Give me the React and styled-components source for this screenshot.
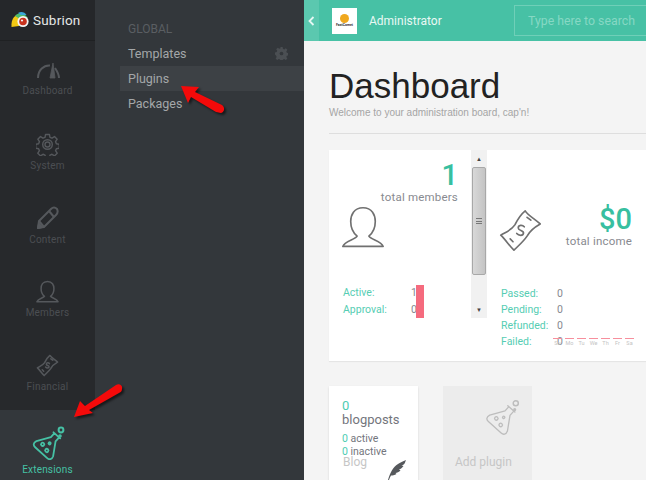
import React from 'react';
import styled, { createGlobalStyle } from 'styled-components';

const GlobalStyle = createGlobalStyle`
  html, body {
    margin: 0;
    padding: 0;
    background: #f4f4f4;
  }
  * {
    box-sizing: border-box;
  }
`;

const Page = styled.div`
  position: relative;
  display: flex;
  width: 646px;
  height: 480px;
  overflow: hidden;
  font-family: Roboto, "Liberation Sans", sans-serif;
`;

const Sidebar = styled.nav`
  width: 95px;
  flex: none;
  display: flex;
  flex-direction: column;
  background: #27292c;
`;

const Brand = styled.div`
  height: 41px;
  display: flex;
  align-items: center;
  gap: 4px;
  padding-left: 11px;
  background: #25272a;
  border-bottom: 1px solid #1f2123;
  color: #e6e7e8;
  font-size: 13.5px;
  letter-spacing: 0.2px;
`;

const NavItem = styled.div`
  height: ${(p) => p.$height || 74}px;
  display: flex;
  flex-direction: column;
  align-items: center;
  justify-content: center;
  gap: ${(p) => p.$gap || 4}px;
  padding-top: ${(p) => p.$pad || 0}px;
  background: ${(p) => (p.$active ? '#33373b' : 'transparent')};
  color: ${(p) => (p.$active ? '#46c1a5' : '#4b4e52')};
  font-size: 10px;
  letter-spacing: 0.2px;
`;

const SubMenu = styled.div`
  width: 209px;
  flex: none;
  display: flex;
  flex-direction: column;
  padding: 21px 0 0 25px;
  background: #33373b;
`;

const SubTitle = styled.div`
  height: 20px;
  padding-left: 8px;
  line-height: 16px;
  color: #5a5e62;
  font-size: 12px;
`;

const SubItem = styled.div`
  height: 25px;
  display: flex;
  align-items: center;
  justify-content: space-between;
  padding: 0 16px 0 8px;
  background: ${(p) => (p.$active ? '#3d4145' : 'transparent')};
  color: #a4a7a9;
  font-size: 12.5px;
`;

const Main = styled.main`
  flex: 1;
  min-width: 0;
  display: flex;
  flex-direction: column;
  background: #f4f4f4;
`;

const TopBar = styled.header`
  height: 41px;
  flex: none;
  display: flex;
  align-items: center;
  background: #47c1a5;
  color: #e9f8f4;
`;

const Toggle = styled.div`
  width: 15px;
  height: 100%;
  display: flex;
  align-items: center;
  justify-content: center;
  background: #5bc8af;
`;

const CompanyLogo = styled.div`
  width: 25px;
  height: 26px;
  margin-left: 13px;
  display: flex;
  flex-direction: column;
  align-items: center;
  padding-top: 6px;
  background: #fff;
  color: #333;
  font-size: 3.5px;
  font-weight: 700;
  line-height: 5px;
`;

const Coin = styled.span`
  width: 9px;
  height: 9px;
  border-radius: 50%;
  background: #f0a81e;
`;

const UserName = styled.div`
  margin-left: 12px;
  font-size: 12px;
`;

const Search = styled.div`
  width: 150px;
  height: 31px;
  margin-left: auto;
  margin-right: -18px;
  padding-left: 13px;
  line-height: 30px;
  border: 1px solid #6fcfb8;
  color: #86d8c4;
  font-size: 12.3px;
`;

const Content = styled.div`
  flex: 1;
  display: flex;
  flex-direction: column;
  padding: 25px 0 0 25px;
`;

const Heading = styled.h1`
  margin: 0;
  height: 40px;
  color: #222;
  font-family: "Liberation Sans", Arial, sans-serif;
  font-size: 35px;
  font-weight: 400;
  line-height: 40px;
`;

const Welcome = styled.div`
  height: 13px;
  color: #a5a5a5;
  font-family: "Liberation Sans", Arial, sans-serif;
  font-size: 10px;
  line-height: 13px;
`;

const Rule = styled.div`
  height: 1px;
  margin-top: 14px;
  background: #dedede;
`;

const StatsPanel = styled.section`
  height: 211px;
  flex: none;
  display: flex;
  margin-top: 16px;
  background: #fff;
  box-shadow: 0 1px 1px rgba(0, 0, 0, 0.06);
`;

const Stat = styled.div`
  position: relative;
  width: ${(p) => p.$width}px;
  display: flex;
  flex-direction: column;
  padding: ${(p) => p.$padding};
`;

const Scrollbar = styled.div`
  position: absolute;
  top: 0;
  right: 0;
  width: 16px;
  height: 168px;
  display: flex;
  flex-direction: column;
  align-items: center;
  background: #f1f1f1;
`;

const ScrollArrow = styled.span`
  height: 17px;
  flex: none;
  display: flex;
  align-items: center;
  margin-top: ${(p) => (p.$end ? 'auto' : '0')};
  color: #444;
  font-size: 6px;
`;

const ScrollThumb = styled.div`
  width: 14px;
  height: 108px;
  display: flex;
  align-items: center;
  justify-content: center;
  border: 1px solid #a8a8a8;
  border-radius: 2px;
  background: linear-gradient(to right, #d8d8d8, #c4c4c4);
`;

const Grip = styled.span`
  width: 6px;
  height: 6px;
  border-top: 1px solid #777;
  border-bottom: 1px solid #777;
  background: linear-gradient(#777, #777) center / 100% 1px no-repeat;
`;

const BigNumber = styled.div`
  color: #38bfa0;
  font-size: ${(p) => p.$size}px;
  font-weight: 500;
  line-height: 1;
  text-align: right;
`;

const BigLabel = styled.div`
  color: #888a90;
  font-size: 11.5px;
  letter-spacing: 0.2px;
  line-height: 15px;
  text-align: right;
`;

const MemberIcon = styled.div`
  height: 79px;
  display: flex;
  margin-left: -2px;
`;

const IncomeIcon = styled.div`
  position: absolute;
  left: 11px;
  top: 58px;
  display: flex;
`;

const Details = styled.div`
  display: flex;
  flex-direction: column;
  margin-top: ${(p) => p.$top || 0}px;
`;

const DetailRow = styled.div`
  height: ${(p) => p.$height}px;
  display: grid;
  grid-template-columns: ${(p) => p.$label}px auto;
  align-items: center;
  color: #868890;
  font-size: 10.5px;
`;

const DetailLabel = styled.span`
  color: #56cdb3;
`;

const PinkBar = styled.div`
  position: absolute;
  left: 87px;
  top: 135px;
  width: 8px;
  height: 33px;
  background: #f56b7e;
`;

const MiniChart = styled.div`
  position: absolute;
  left: 66px;
  top: 188px;
  display: flex;
  gap: 3px;
`;

const ChartDay = styled.span`
  width: 9px;
  border-top: 1px solid #f78f9d;
  color: #c4c4c4;
  font-size: 5.5px;
  line-height: 9px;
  text-align: center;
`;

const Tiles = styled.section`
  display: flex;
  gap: 25px;
  margin-top: 25px;
`;

const Tile = styled.div`
  position: relative;
  width: 89px;
  height: 100px;
  flex: none;
  padding: ${(p) => (p.$muted ? '0' : '13px 0 0 13px')};
  background: ${(p) => (p.$muted ? '#ececec' : '#fff')};
  box-shadow: ${(p) => (p.$muted ? 'none' : '0 1px 2px rgba(0, 0, 0, 0.12)')};
`;

const TileCount = styled.div`
  color: #4dccb2;
  font-size: 13px;
  line-height: 14px;
`;

const TileName = styled.div`
  color: #73757c;
  font-size: 13px;
  line-height: 14px;
  margin-bottom: 5px;
`;

const TileLine = styled.div`
  color: #73757c;
  font-size: 10.5px;
  line-height: 13px;

  b {
    color: #4dccb2;
    font-weight: 400;
  }
`;

const TileCaption = styled.div`
  position: absolute;
  left: ${(p) => p.$left}px;
  top: ${(p) => p.$top}px;
  color: #c6c6c6;
  font-size: 12px;
  white-space: nowrap;
`;

const TileIcon = styled.div`
  position: absolute;
  left: ${(p) => p.$left}px;
  top: ${(p) => p.$top}px;
  display: flex;
`;

const Arrow = styled.svg`
  position: absolute;
  left: ${(p) => p.$left}px;
  top: ${(p) => p.$top}px;
  filter: drop-shadow(2px 2px 1px rgba(0, 0, 0, 0.55));
`;

const SubrionLogo = () => (
  <svg width="18" height="17" viewBox="0 0 18 17">
    <path d="M0.5 16 C0 9 3 3.5 8 4 L8 15 Z" fill="#f2c813" />
    <path d="M4 5 C7 1 13 1 17 7 L9 8 Z" fill="#4dbb6e" />
    <path d="M7 2 C10 0 14 1 15.5 4 L10 4 Z" fill="#3aa7d8" />
    <circle cx="12" cy="10.5" r="5.6" fill="#f4f4f4" />
    <circle cx="12" cy="10.5" r="3.8" fill="#c8321e" />
    <circle cx="11" cy="9.5" r="1.1" fill="#f4f4f4" />
  </svg>
);

const Gauge = () => (
  <svg width="24" height="17" viewBox="0 0 24 17" fill="none" stroke="#55585c" strokeWidth="2">
    <path d="M2 16 C2 8 8 3 14 3.5" />
    <path d="M19 6 C21 9 23 12 23 16" />
    <path d="M14 16 L17 1 L19 16 Z" fill="#55585c" strokeWidth="0.8" />
  </svg>
);

const Gear = () => (
  <svg width="23" height="23" viewBox="0 0 24 24" fill="none" stroke="#55585c" strokeWidth="1.5" strokeLinejoin="round">
    <path d="M10 1.5h4l.6 3 2.1.9 2.6-1.7 2.8 2.8-1.7 2.6.9 2.1 3 .6v4l-3 .6-.9 2.1 1.7 2.6-2.8 2.8-2.6-1.7-2.1.9-.6 3h-4l-.6-3-2.1-.9-2.6 1.7-2.8-2.8 1.7-2.6-.9-2.1-3-.6v-4l3-.6.9-2.1-1.7-2.6 2.8-2.8 2.6 1.7 2.1-.9z" />
    <circle cx="12" cy="12" r="5" />
    <circle cx="12" cy="12" r="2.6" />
  </svg>
);

const Pencil = () => (
  <svg width="23" height="24" viewBox="0 0 23 24" fill="none" stroke="#55585c" strokeWidth="2" strokeLinejoin="round">
    <path d="M2 22 L3 15 L15 3 C17 1 19 1 21 3 C22 5 22 7 20 9 L8 21 Z" />
    <path d="M13 5 L18 11 M3 15 L8 21" />
    <path d="M2 22 L3 18 L6 21 Z" fill="#55585c" />
  </svg>
);

const Person = ({ size = 23, color = '#55585c', sw = 1.6 }) => (
  <svg width={size} height={size} viewBox="0 0 24 24" fill="none" stroke={color} strokeWidth={sw} strokeLinejoin="round">
    <path d="M12 1.5 C7 1.5 5.3 5.5 5.3 9 C5.3 12.5 7 15.5 8.8 17 C7.5 19 2 19.5 1 22.6 L23 22.6 C22 19.5 16.5 19 15.2 17 C17 15.5 18.7 12.5 18.7 9 C18.7 5.5 17 1.5 12 1.5 Z" />
  </svg>
);

const Money = ({ size = 23, color = '#55585c', sw = 1.6 }) => (
  <svg width={size} height={size} viewBox="0 0 24 24" fill="none" stroke={color} strokeWidth={sw} strokeLinejoin="round" strokeLinecap="round">
    <path d="M14.5 1.5 C16 4 20 6 22.5 8.5 C19 10.5 17 12 15.5 15 C13.5 18 11 20 8.5 22.5 C6 20 4 17 1.5 14.5 C4 13 7 12 9 9 C10.5 6 12 3.5 14.5 1.5 Z" />
    <path d="M14 10 C13 8.8 10.8 9 10.8 10.6 C10.8 12.2 13.8 11.8 13.6 13.4 C13.4 15 11 14.8 10 13.6" />
    <path d="M15.5 5 L17.5 6.5 M8 18 L6.5 16.5" />
  </svg>
);

const Flask = ({ size = 34, color = '#46c1a5', sw = 2 }) => (
  <svg width={size} height={size} viewBox="0 0 34 34" fill="none" stroke={color} strokeWidth={sw} strokeLinejoin="round" strokeLinecap="round">
    <g transform="translate(4 -1) rotate(42 14 19) translate(1.4 1.9) scale(0.9)">
      <path d="M9 6 H19 M10.5 6 V12 L1.5 26 C0 30 2 32 5 32 H23 C26 32 28 30 26.5 26 L17.5 12 V6" />
      <circle cx="9" cy="24" r="1.8" />
      <circle cx="17" cy="26" r="1.8" />
      <circle cx="14" cy="18" r="1.2" />
    </g>
    <circle cx="30" cy="4" r="2.4" />
    <circle cx="29" cy="10" r="0.8" />
  </svg>
);

const Quill = () => (
  <svg width="19" height="20" viewBox="0 0 19 20">
    <path d="M1 20 C3 13 6 7 11 4 C13 3 16 1 19 0 C18 2 18 4 16 5 L14.5 5.5 L16.5 6 C15 8 14 9 12 9.5 L13.5 10.5 C12 12 10 13 8.5 13 L9.5 14 C7.5 15 5.5 15.5 4 15.5 C3 17 2.5 18.5 2 20 Z" fill="#55585c" />
  </svg>
);

const Cog = () => (
  <svg width="13" height="13" viewBox="0 0 24 24" fill="#4b4f53">
    <path d="M10 0h4l.7 3.4 2.4 1 2.9-1.9 2.8 2.8-1.9 2.9 1 2.4 3.1.7v4l-3.1.7-1 2.4 1.9 2.9-2.8 2.8-2.9-1.9-2.4 1-.7 3.3h-4l-.7-3.3-2.4-1-2.9 1.9-2.8-2.8 1.9-2.9-1-2.4L0 14v-4l3.1-.7 1-2.4L2.2 4 5 1.2l2.9 1.9 2.4-1z" />
    <circle cx="12" cy="12" r="3.4" fill="#33373b" />
  </svg>
);

const RedArrow = ({ left, top, width, height, d }) => (
  <Arrow $left={left} $top={top} width={width} height={height} viewBox={`0 0 ${width} ${height}`}>
    <path d={d} fill="#f40a0a" />
  </Arrow>
);

const App = () => {
  const days = ['Su', 'Mo', 'Tu', 'We', 'Th', 'Fr', 'Sa'];

  return (
    <Page>
      <GlobalStyle />
      <Sidebar>
        <Brand>
          <SubrionLogo />
          Subrion
        </Brand>
        <NavItem $pad={2} $gap={6}><Gauge />Dashboard</NavItem>
        <NavItem><Gear />System</NavItem>
        <NavItem><Pencil />Content</NavItem>
        <NavItem><Person />Members</NavItem>
        <NavItem><Money />Financial</NavItem>
        <NavItem $active $height={70} $pad={10}><Flask />Extensions</NavItem>
      </Sidebar>

      <SubMenu>
        <SubTitle>GLOBAL</SubTitle>
        <SubItem>Templates<Cog /></SubItem>
        <SubItem $active>Plugins</SubItem>
        <SubItem>Packages</SubItem>
      </SubMenu>

      <Main>
        <TopBar>
          <Toggle>
            <svg width="7" height="10" viewBox="0 0 7 10" fill="none" stroke="#e6f7f3" strokeWidth="1.8">
              <path d="M5.5 1 L1.5 5 L5.5 9" />
            </svg>
          </Toggle>
          <CompanyLogo>
            <Coin />
            FastComet
          </CompanyLogo>
          <UserName>Administrator</UserName>
          <Search>Type here to search</Search>
        </TopBar>

        <Content>
          <Heading>Dashboard</Heading>
          <Welcome>Welcome to your administration board, cap'n!</Welcome>
          <Rule />

          <StatsPanel>
            <Stat $width={158} $padding="11px 29px 0 14px">
              <BigNumber $size={29}>1</BigNumber>
              <BigLabel>total members</BigLabel>
              <MemberIcon><Person size={44} color="#707070" sw={0.9} /></MemberIcon>
              <Details>
                <DetailRow $height={17} $label={68}><DetailLabel>Active:</DetailLabel>1</DetailRow>
                <DetailRow $height={17} $label={68}><DetailLabel>Approval:</DetailLabel>0</DetailRow>
              </Details>
              <PinkBar />
              <Scrollbar>
                <ScrollArrow>▲</ScrollArrow>
                <ScrollThumb><Grip /></ScrollThumb>
                <ScrollArrow $end>▼</ScrollArrow>
              </Scrollbar>
            </Stat>
            <Stat $width={159} $padding="55px 14px 0 14px">
              <BigNumber $size={29}>$0</BigNumber>
              <BigLabel>total income</BigLabel>
              <IncomeIcon><Money size={45} color="#707070" sw={0.9} /></IncomeIcon>
              <Details $top={36}>
                <DetailRow $height={16} $label={56}><DetailLabel>Passed:</DetailLabel>0</DetailRow>
                <DetailRow $height={16} $label={56}><DetailLabel>Pending:</DetailLabel>0</DetailRow>
                <DetailRow $height={16} $label={56}><DetailLabel>Refunded:</DetailLabel>0</DetailRow>
                <DetailRow $height={16} $label={56}><DetailLabel>Failed:</DetailLabel>0</DetailRow>
              </Details>
              <MiniChart>
                {days.map((day) => <ChartDay key={day}>{day}</ChartDay>)}
              </MiniChart>
            </Stat>
          </StatsPanel>

          <Tiles>
            <Tile>
              <TileCount>0</TileCount>
              <TileName>blogposts</TileName>
              <TileLine><b>0</b> active</TileLine>
              <TileLine><b>0</b> inactive</TileLine>
              <TileCaption $left={14} $top={69}>Blog</TileCaption>
              <TileIcon $left={58} $top={74}><Quill /></TileIcon>
            </Tile>
            <Tile $muted>
              <TileCaption $left={12} $top={69}>Add plugin</TileCaption>
              <TileIcon $left={41} $top={13}><Flask size={36} color="#bdbdbd" sw={1.4} /></TileIcon>
            </Tile>
          </Tiles>
        </Content>
      </Main>

      <RedArrow left={70} top={380} width={56} height={44} d="M4 37 L10 21 L15 26 L46 5 C49 3 53 5 52 9 C52 11 51 12 49 13 L19 30 L23 33 Z" />
      <RedArrow left={178} top={82} width={50} height={36} d="M3 4 L21 5 L17 10 L44 23 C47 25 47 30 43 31 C41 31 40 30 38 30 L13 15 L10 21 Z" />
    </Page>
  );
};

export default App;
